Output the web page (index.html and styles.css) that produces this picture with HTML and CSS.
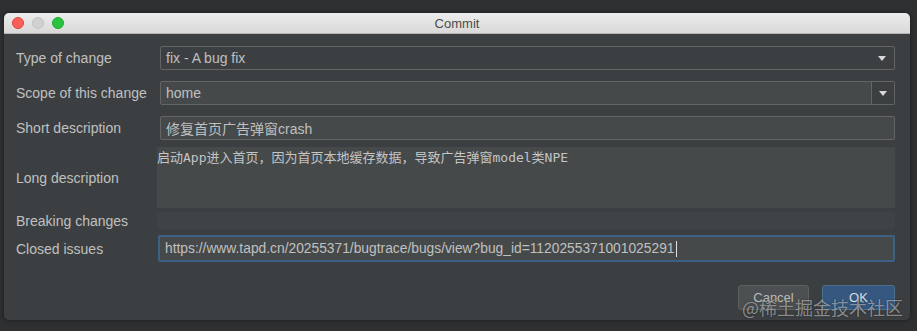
FILE: index.html
```html
<!DOCTYPE html>
<html lang="en">
<head>
  <meta charset="UTF-8" />
  <meta name="viewport" content="width=device-width, initial-scale=1.0"/>
  <title>Commit</title>
  <link rel="stylesheet" href="styles.css">
</head>
<body>

  <div class="desktop">
    <div class="window">
      <div class="titlebar">
        <div class="lights">
          <span class="light red"></span>
          <span class="light gray"></span>
          <span class="light green"></span>
        </div>
        <div class="title">Commit</div>
      </div>

      <div class="content">
        <div class="row row-type">
          <label>Type of change</label>
          <div class="combo">
            <span class="value">fix - A bug fix</span>
            <span class="arrow"></span>
          </div>
        </div>

        <div class="row row-scope">
          <label>Scope of this change</label>
          <div class="combo editable">
            <span class="value">home</span>
            <span class="arrow-box"><span class="arrow"></span></span>
          </div>
        </div>

        <div class="row row-short">
          <label>Short description</label>
          <div class="field">修复首页广告弹窗crash</div>
        </div>

        <div class="row row-long">
          <label>Long description</label>
          <div class="area">启动App进入首页，因为首页本地缓存数据，导致广告弹窗model类NPE</div>
        </div>

        <div class="row row-breaking">
          <label>Breaking changes</label>
          <div class="area small"></div>
        </div>

        <div class="row row-closed">
          <label>Closed issues</label>
          <div class="field focused">https://www.tapd.cn/20255371/bugtrace/bugs/view?bug_id=1120255371001025291<span class="caret"></span></div>
        </div>

        <div class="buttons">
          <button class="btn">Cancel</button>
          <button class="btn primary">OK</button>
        </div>
      </div>

      <div class="watermark">@稀土掘金技术社区</div>
    </div>
  </div>

</body>
</html>
```

FILE: styles.css
```css
body {
  margin: 0;
  background-color: #2f3032;
  font-family: "Liberation Sans", Arial, "Noto Sans CJK SC", sans-serif;
}

.desktop {
  width: 917px;
  height: 331px;
  padding: 13px 0 0 4px;
  box-sizing: border-box;
}

.window {
  position: relative;
  width: 906px;
  height: 307px;
  background: #3c3f41;
  border-radius: 5px;
  overflow: hidden;
  box-shadow: 0 0 4px rgba(0,0,0,0.5);
}

.titlebar {
  height: 20px;
  background: linear-gradient(#ececec, #d9d9d9);
  border-bottom: 1px solid #b5b5b5;
  display: flex;
  align-items: center;
  position: relative;
}

.lights {
  display: flex;
  gap: 8px;
  padding-left: 8px;
}

.light {
  width: 12px;
  height: 12px;
  border-radius: 50%;
  box-sizing: border-box;
}

.red { background: #fc5f57; border: 1px solid #e0443e; }
.gray { background: #d1d1d1; border: 1px solid #c2c2c2; }
.green { background: #29c33f; border: 1px solid #1dab2f; }

.title {
  position: absolute;
  left: 0;
  right: 0;
  text-align: center;
  font-size: 13px;
  color: #4c4c4c;
}

.content {
  padding: 12px 15px 0 12px;
  display: flex;
  flex-direction: column;
}

.row {
  display: grid;
  grid-template-columns: 144px 1fr;
  align-items: center;
}

.row label {
  font-size: 14px;
  color: #c0c0c0;
}

.row-scope { margin-top: 11px; }
.row-short { margin-top: 11px; }
.row-long { margin-top: 7px; }
.row-breaking { margin-top: 4px; }
.row-closed { margin-top: 6px; }

.combo, .field {
  height: 24px;
  box-sizing: border-box;
  border: 1px solid #636565;
  border-radius: 2px;
  display: flex;
  align-items: center;
  font-size: 14px;
  color: #c0c0c0;
}

.combo {
  background: #3c3f41;
  padding-left: 5px;
}

.combo .value {
  flex: 1;
}

.combo.editable {
  background: #45494a;
}

.arrow {
  width: 0;
  height: 0;
  border-left: 4px solid transparent;
  border-right: 4px solid transparent;
  border-top: 5px solid #d8d8d8;
  margin-right: 8px;
}

.arrow-box {
  width: 22px;
  height: 22px;
  border-left: 1px solid #636565;
  display: flex;
  align-items: center;
  justify-content: center;
  background: #3c3f41;
}

.arrow-box .arrow {
  margin-right: 0;
}

.field {
  background: #45494a;
  padding-left: 5px;
}

.field.focused {
  height: 27px;
  border: 2px solid #3d6185;
  padding-left: 5px;
  font-size: 13.8px;
  margin-left: -2px;
}

.caret {
  display: inline-block;
  width: 1px;
  height: 16px;
  background: #e0e0e0;
  margin-left: 1px;
}

.area {
  margin-left: -3px;
  height: 61px;
  background: #45494a;
  font-family: "DejaVu Sans Mono", "Noto Sans CJK SC", monospace;
  font-size: 13px;
  color: #c4c4c4;
  line-height: 17px;
  padding-top: 2px;
  box-sizing: border-box;
}

.area.small {
  height: 17px;
  background: #404345;
  border-radius: 3px;
  padding: 0;
}

.buttons {
  display: flex;
  justify-content: flex-end;
  gap: 13px;
  margin-top: 23px;
}

.btn {
  width: 71px;
  height: 25px;
  border-radius: 3px;
  font-family: "Liberation Sans", Arial, sans-serif;
  font-size: 13px;
  color: #bbbbbb;
  background: #4c5052;
  border: 1px solid #5e6060;
}

.btn.primary {
  width: 73px;
  background: #365880;
  border-color: #4c708c;
  color: #dddddd;
}

.watermark {
  position: absolute;
  left: 738px;
  top: 281px;
  font-family: "Noto Sans CJK SC", sans-serif;
  font-size: 18px;
  color: rgba(220,220,220,0.55);
  text-shadow: 0 0 2px rgba(0,0,0,0.5);
}
```
